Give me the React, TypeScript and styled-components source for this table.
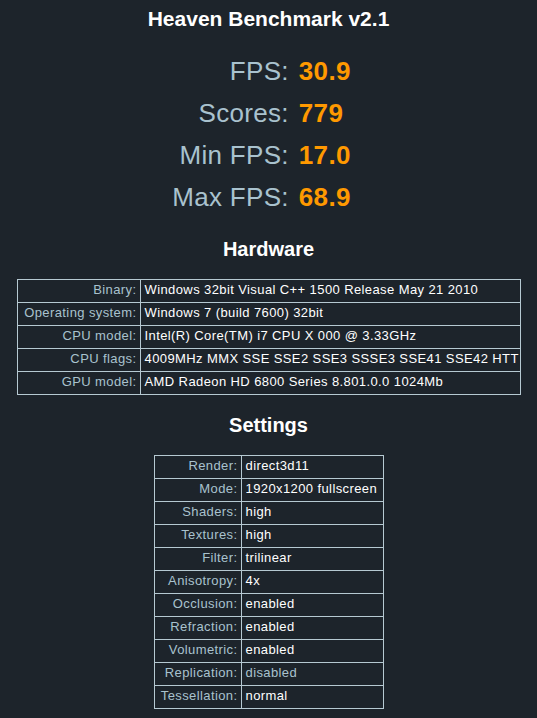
import React from "react";
import styled, { createGlobalStyle } from "styled-components";

const GlobalStyle = createGlobalStyle`
  html, body {
    margin: 0;
    padding: 0;
    background: #1d242b;
  }
  body {
    font-family: "Liberation Sans", Arial, sans-serif;
    color: #ffffff;
  }
`;

const Page = styled.div`
  display: flex;
  flex-direction: column;
  align-items: center;
  padding: 7px 0 10px;
`;

const Title = styled.h1`
  margin: 0;
  font-size: 21px;
  line-height: 24px;
  font-weight: bold;
  color: #ffffff;
`;

const Heading = styled.h2`
  margin: 18px 0;
  font-size: 20px;
  line-height: 24px;
  font-weight: bold;
  color: #ffffff;
`;

const Stats = styled.div`
  display: grid;
  grid-template-columns: auto auto;
  column-gap: 10px;
  margin-top: 19px;
  margin-bottom: 1px;
  padding-right: 14px;
  font-size: 26px;
  line-height: 42px;
  letter-spacing: 0.3px;
`;

const StatLabel = styled.div`
  text-align: right;
  color: #a9c2ce;
`;

const StatValue = styled.div`
  font-weight: bold;
  color: #ff9900;
`;

const Table = styled.table<{ $width: number }>`
  width: ${(p) => p.$width}px;
  border-collapse: collapse;
  font-size: 13px;
  letter-spacing: 0.4px;
  table-layout: fixed;
`;

const Label = styled.td<{ $width: number }>`
  width: ${(p) => p.$width}px;
  box-sizing: border-box;
  border: 1px solid #b6c9d2;
  padding: 0 3px 2px 0;
  line-height: 20px;
  text-align: right;
  white-space: nowrap;
  color: #a9c2ce;
`;

const Value = styled.td<{ $muted?: boolean }>`
  border: 1px solid #b6c9d2;
  padding: 0 2px 2px 4px;
  line-height: 20px;
  white-space: nowrap;
  color: ${(p) => (p.$muted ? "#a9c2ce" : "#ffffff")};
`;

const stats: [string, string][] = [
  ["FPS:", "30.9"],
  ["Scores:", "779"],
  ["Min FPS:", "17.0"],
  ["Max FPS:", "68.9"],
];

const hardware: [string, string][] = [
  ["Binary:", "Windows 32bit Visual C++ 1500 Release May 21 2010"],
  ["Operating system:", "Windows 7 (build 7600) 32bit"],
  ["CPU model:", "Intel(R) Core(TM) i7 CPU X 000 @ 3.33GHz"],
  ["CPU flags:", "4009MHz MMX SSE SSE2 SSE3 SSSE3 SSE41 SSE42 HTT"],
  ["GPU model:", "AMD Radeon HD 6800 Series 8.801.0.0 1024Mb"],
];

const settings: [string, string][] = [
  ["Render:", "direct3d11"],
  ["Mode:", "1920x1200 fullscreen"],
  ["Shaders:", "high"],
  ["Textures:", "high"],
  ["Filter:", "trilinear"],
  ["Anisotropy:", "4x"],
  ["Occlusion:", "enabled"],
  ["Refraction:", "enabled"],
  ["Volumetric:", "enabled"],
  ["Replication:", "disabled"],
  ["Tessellation:", "normal"],
];

function InfoTable({ rows, width, labelWidth }: { rows: [string, string][]; width: number; labelWidth: number }) {
  return (
    <Table $width={width}>
      <tbody>
        {rows.map(([label, value]) => (
          <tr key={label}>
            <Label $width={labelWidth}>{label}</Label>
            <Value $muted={value === "disabled"}>{value}</Value>
          </tr>
        ))}
      </tbody>
    </Table>
  );
}

export default function App() {
  return (
    <Page>
      <GlobalStyle />
      <Title>Heaven Benchmark v2.1</Title>
      <Stats>
        {stats.map(([label, value]) => (
          <React.Fragment key={label}>
            <StatLabel>{label}</StatLabel>
            <StatValue>{value}</StatValue>
          </React.Fragment>
        ))}
      </Stats>
      <Heading>Hardware</Heading>
      <InfoTable rows={hardware} width={504} labelWidth={123} />
      <Heading>Settings</Heading>
      <InfoTable rows={settings} width={230} labelWidth={87} />
    </Page>
  );
}
